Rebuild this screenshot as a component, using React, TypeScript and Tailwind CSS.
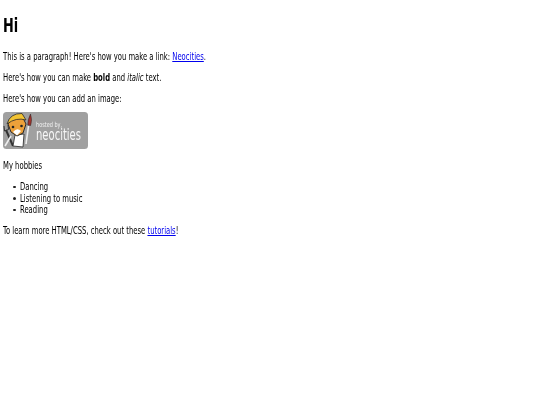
function T({ children, className = "" }: { children: React.ReactNode; className?: string }) {
  return <div className={"origin-left scale-x-[0.753] whitespace-nowrap " + className}>{children}</div>;
}

function Item({ children }: { children: React.ReactNode }) {
  return (
    <li className="flex items-center gap-[4.5px]">
      <span className="h-[2.5px] w-[2.5px] rounded-full bg-[#222]" />
      <T>{children}</T>
    </li>
  );
}

export default function App() {
  return (
    <div className="min-h-[405px] bg-white px-[3px] pt-[14px] text-[10.1px] leading-[11.5px] text-black blur-[0.25px] [font-family:'DejaVu_Sans_Condensed','DejaVu_Sans',sans-serif] [font-stretch:condensed]">
      <h1 className="text-[19px] font-bold leading-[22px]"><T>Hi</T></h1>
      <p className="mt-[14.5px]"><T>This is a paragraph! Here's how you make a link: <a href="#" className="text-[#0000ee] underline">Neocities</a>.</T></p>
      <p className="mt-[9.5px]"><T>Here's how you can make <b>bold</b> and <i>italic</i> text.</T></p>
      <p className="mt-[9.5px]"><T>Here's how you can add an image:</T></p>
      <div className="mt-[8px] h-[37px] w-[85px]">
        <svg width="85" height="37" viewBox="0 0 85 37" className="block">
          <rect x="0" y="0" width="85" height="37" rx="3.5" fill="#a0a0a0" />
          <path d="M3 18 L10 34" stroke="#333" strokeWidth="2" />
          <path d="M1 14 L1.5 19 L5.5 17.5 L5 13" fill="none" stroke="#333" strokeWidth="1" />
          <path d="M2 34 L8 24" stroke="#eee" strokeWidth="1.6" />
          <path d="M12 23 L10 34 L20 35 L21 22 Z" fill="#fff" stroke="#222" strokeWidth=".8" />
          <path d="M5 12 L8 20 L14 24 L20 21 L23 12 L20 6 L9 6 Z" fill="#eda13a" stroke="#2b2b2b" strokeWidth="1" />
          <path d="M4 12 Q7 1 19 1.5 L23 8 Q13 5 4 12 Z" fill="#f1c232" stroke="#2b2b2b" strokeWidth=".8" />
          <path d="M10 20 Q14 15 18 19 L14 23.5 Z" fill="#fff" />
          <circle cx="10" cy="15" r="1.3" fill="#222" />
          <circle cx="18.5" cy="14" r="1.3" fill="#222" />
          <path d="M25.5 14 L23 32" stroke="#eee" strokeWidth="1.6" />
          <path d="M27.5 2 Q24.5 8 24.8 13 L27.6 13.5 Q29.5 8 27.5 2 Z" fill="#a5332c" stroke="#222" strokeWidth=".5" />
          <text x="33" y="15" fontSize="7" fill="#f2f2f2" fontFamily="DejaVu Sans" textLength="26" lengthAdjust="spacingAndGlyphs">hosted by,</text>
          <text x="33" y="28" fontSize="15" fill="#f7f7f7" fontFamily="DejaVu Sans" textLength="45" lengthAdjust="spacingAndGlyphs">neocities</text>
        </svg>
      </div>
      <p className="mt-[11px]"><T>My hobbies</T></p>
      <ul className="mt-[9.5px] pl-[10px]">
        <Item>Dancing</Item>
        <Item>Listening to music</Item>
        <Item>Reading</Item>
      </ul>
      <p className="mt-[9.5px]"><T>To learn more HTML/CSS, check out these <a href="#" className="text-[#0000ee] underline">tutorials</a>!</T></p>
    </div>
  );
}
